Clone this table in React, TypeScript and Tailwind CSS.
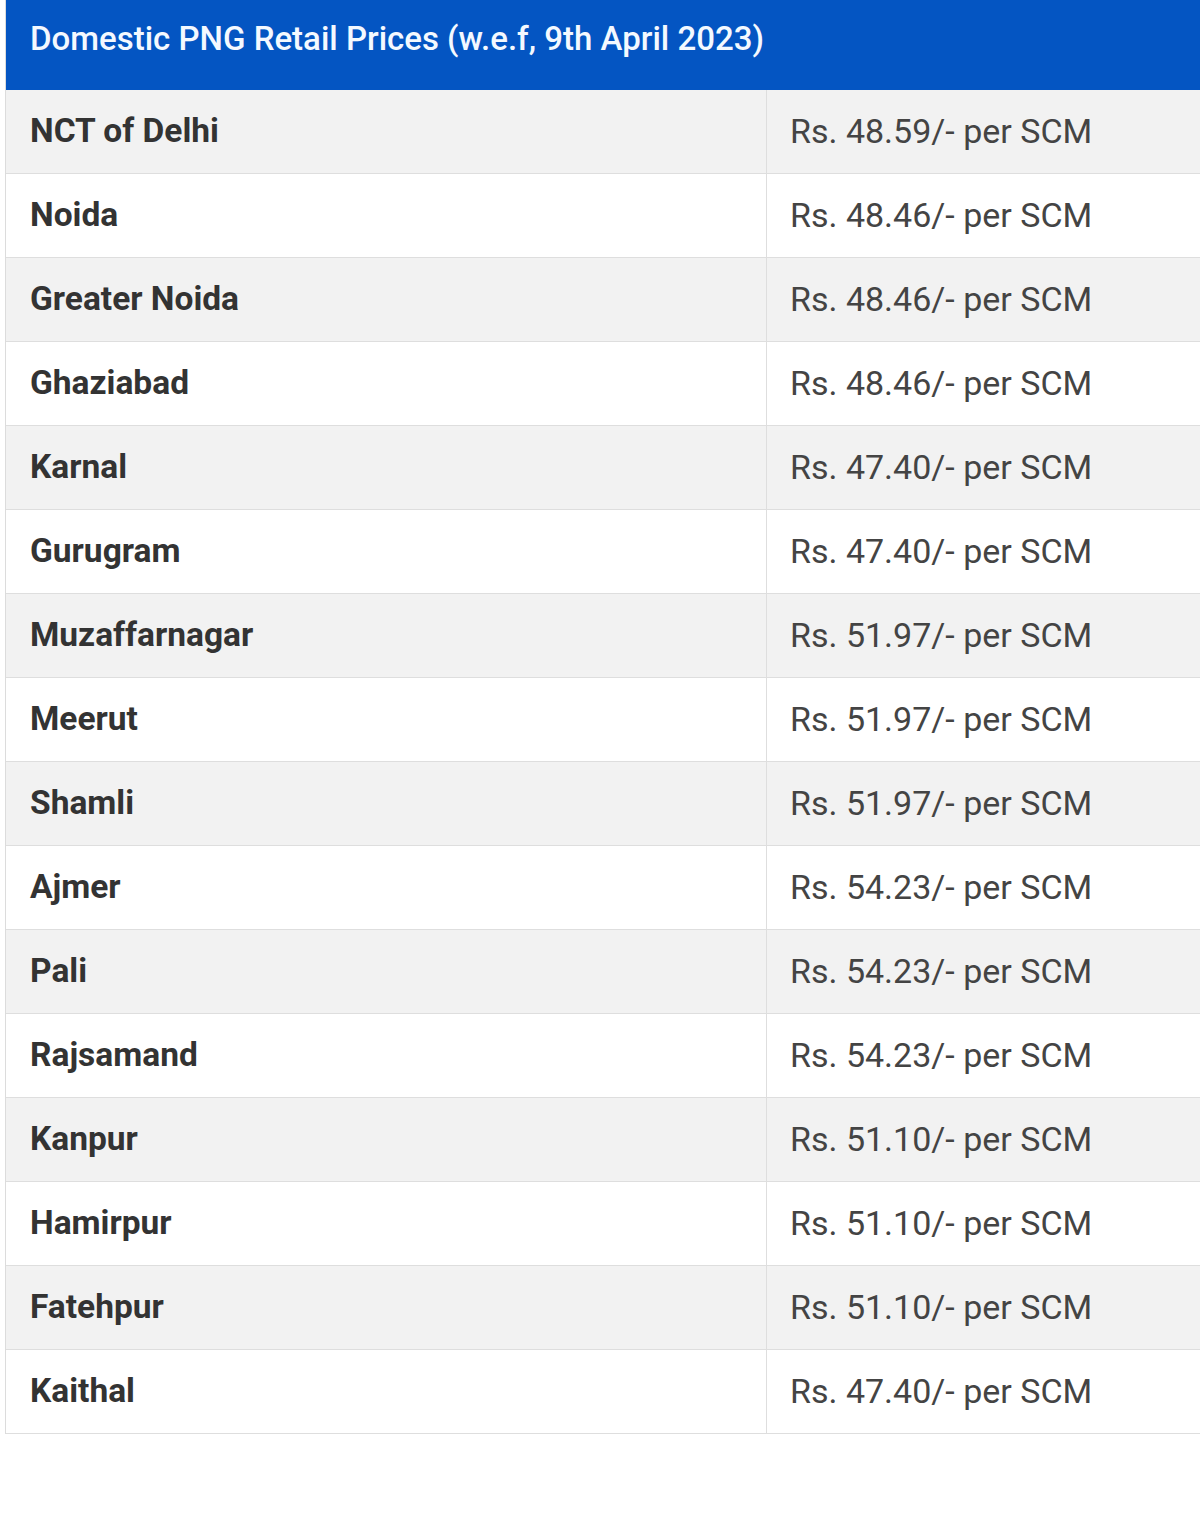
import React from "react";

const rows: [string, string][] = [
  ["NCT of Delhi", "Rs. 48.59/- per SCM"],
  ["Noida", "Rs. 48.46/- per SCM"],
  ["Greater Noida", "Rs. 48.46/- per SCM"],
  ["Ghaziabad", "Rs. 48.46/- per SCM"],
  ["Karnal", "Rs. 47.40/- per SCM"],
  ["Gurugram", "Rs. 47.40/- per SCM"],
  ["Muzaffarnagar", "Rs. 51.97/- per SCM"],
  ["Meerut", "Rs. 51.97/- per SCM"],
  ["Shamli", "Rs. 51.97/- per SCM"],
  ["Ajmer", "Rs. 54.23/- per SCM"],
  ["Pali", "Rs. 54.23/- per SCM"],
  ["Rajsamand", "Rs. 54.23/- per SCM"],
  ["Kanpur", "Rs. 51.10/- per SCM"],
  ["Hamirpur", "Rs. 51.10/- per SCM"],
  ["Fatehpur", "Rs. 51.10/- per SCM"],
  ["Kaithal", "Rs. 47.40/- per SCM"],
];

export default function App() {
  return (
    <div
      className="min-h-[1537px] w-[1200px] overflow-hidden bg-white pl-[5px]"
      style={{ fontFamily: "Roboto, 'Liberation Sans', sans-serif" }}
    >
      <div className="w-[1200px] border-l border-[#dcdcdc]">
        <div className="flex h-[90px] items-start bg-[#0455c2] pl-[24px] pt-[14px] text-[33px] font-medium text-[#f4f9ff]">
          Domestic PNG Retail Prices (w.e.f, 9th April 2023)
        </div>
        {rows.map(([city, price], i) => (
          <div
            key={city}
            className={`flex h-[84px] border-b border-[#dedede] ${
              i % 2 === 0 ? "bg-[#f2f2f2]" : "bg-white"
            }`}
          >
            <div className="flex w-[761px] items-center border-r border-[#dedede] pl-[24px] text-[33.5px] font-bold text-[#333]">
              {city}
            </div>
            <div className="flex flex-1 items-center pl-[23px] text-[34px] text-[#444]">
              {price}
            </div>
          </div>
        ))}
      </div>
    </div>
  );
}
